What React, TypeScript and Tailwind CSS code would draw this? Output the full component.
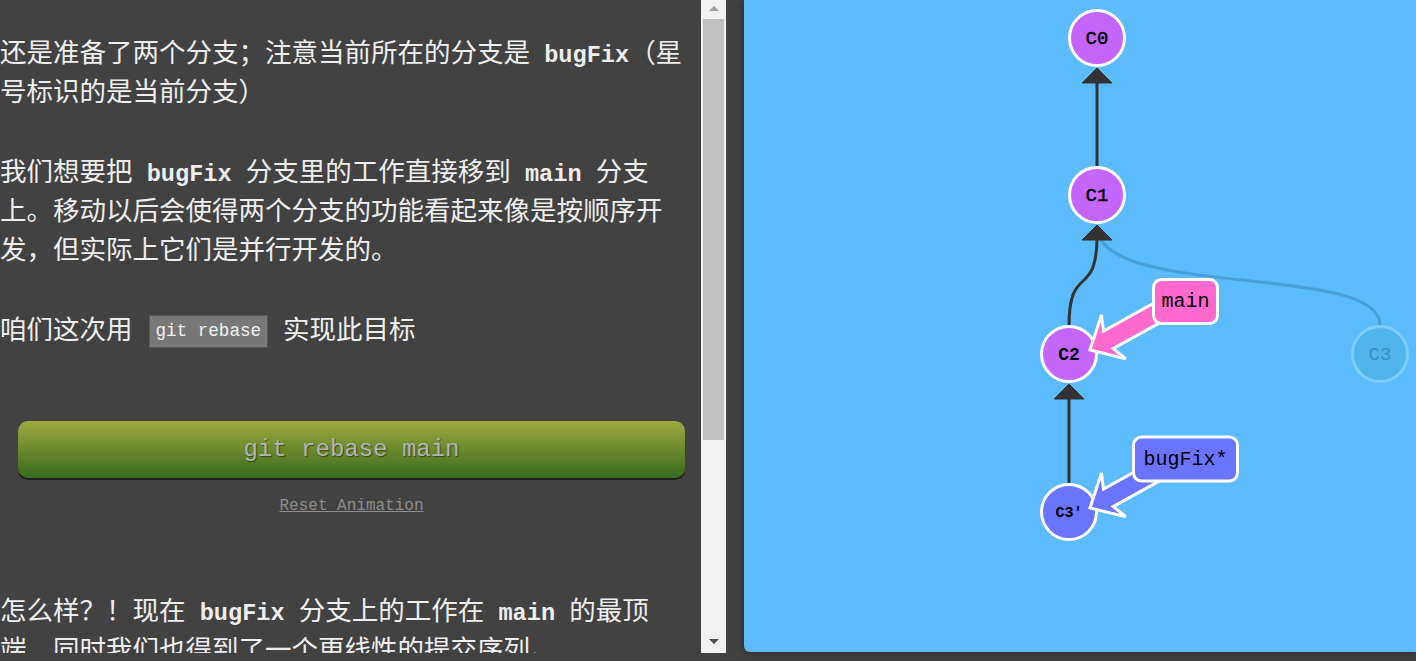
const cjk = "font-['Noto_Sans_CJK_SC',sans-serif]";
const mono = "font-['Liberation_Mono',monospace]";

function Code({ children }: { children: string }) {
  return <b className={`${mono} text-[23.6px] leading-[0] font-bold whitespace-pre`}>{children}</b>;
}

function Scrollbar() {
  return (
    <div className="flex h-[653px] w-[25px] shrink-0 flex-col bg-[#f1f1f1]">
      <div className="flex h-[17px] items-center justify-center">
        <div className="h-0 w-0 border-x-[5px] border-b-[5px] border-x-transparent border-b-[#a3a3a3]" />
      </div>
      <div className="mx-[2px] mt-[2px] h-[421px] bg-[#c1c1c1]" />
      <div className="flex-1" />
      <div className="flex h-[26px] items-start justify-center pt-[12px]">
        <div className="h-0 w-0 border-x-[5px] border-t-[5px] border-x-transparent border-t-[#505050]" />
      </div>
    </div>
  );
}

function Node({ x, y, label, fill, size = 19, bold = false }: { x: number; y: number; label: string; fill: string; size?: number; bold?: boolean }) {
  return (
    <g>
      <circle cx={x} cy={y} r={27.5} fill={fill} stroke="#fff" strokeWidth={3} />
      <text
        x={x}
        y={y + 1}
        textAnchor="middle"
        dominantBaseline="central"
        fontFamily="Liberation Mono, monospace"
        fontSize={size}
        fontWeight={bold ? 700 : 400}
        fill="#000"
        stroke="#000"
        strokeWidth={bold ? 0 : 0.45}
      >
        {label}
      </text>
    </g>
  );
}

// branch label with its fat arrow pointing at the commit
function Branch({ tipX, tipY, rx, ry, w, label, fill }: { tipX: number; tipY: number; rx: number; ry: number; w: number; label: string; fill: string }) {
  return (
    <g>
      <polygon
        points="0,0 27,-25 21,-10 100,-10 100,10 21,10 27,25"
        transform={`translate(${tipX} ${tipY}) rotate(-29)`}
        fill={fill}
        stroke="#fff"
        strokeWidth={3}
        strokeLinejoin="miter"
      />
      <rect x={rx} y={ry} width={w} height={44} rx={8} fill={fill} stroke="#fff" strokeWidth={3} />
      <text
        x={rx + w / 2}
        y={ry + 22}
        textAnchor="middle"
        dominantBaseline="central"
        fontFamily="Liberation Mono, monospace"
        fontSize={20}
        fill="#000"
      >
        {label}
      </text>
    </g>
  );
}

function Graph() {
  return (
    <svg width={672} height={652} className="block">
      {/* faded edge C3 -> C1 */}
      <path d="M 636 325 C 636 262, 353 300, 353 226" fill="none" stroke="#4aa0d6" strokeWidth={3} />
      {/* C1 -> C0 */}
      <line x1={353} y1={167} x2={353} y2={80} stroke="#333" strokeWidth={3} />
      <polygon points="353,68 368,83 338,83" fill="#333" stroke="#333" strokeWidth={1} strokeLinejoin="round" />
      {/* C2 -> C1 */}
      <path d="M 325 326 C 325 262, 353 300, 353 236" fill="none" stroke="#333" strokeWidth={3} />
      <polygon points="353,225 368,240 338,240" fill="#333" stroke="#333" strokeWidth={1} strokeLinejoin="round" />
      {/* C3' -> C2 */}
      <line x1={325} y1={484} x2={325} y2={396} stroke="#333" strokeWidth={3} />
      <polygon points="325,384 340,399 310,399" fill="#333" stroke="#333" strokeWidth={1} strokeLinejoin="round" />

      <Node x={353} y={38} label="C0" fill="#c466fc" />
      <Node x={353} y={195} label="C1" fill="#c466fc" />
      <Node x={325} y={354} label="C2" fill="#c466fc" size={18} bold />
      <Node x={325} y={512} label="C3'" fill="#6a74fc" size={15} bold />

      <g>
        <circle cx={636} cy={354} r={27.5} fill="#52b4ec" stroke="#7fcbfb" strokeWidth={3} />
        <text x={636} y={355} textAnchor="middle" dominantBaseline="central" fontFamily="Liberation Mono, monospace" fontSize={19} fill="#3f8fc4">
          C3
        </text>
      </g>

      <Branch tipX={346} tipY={350} rx={409.5} ry={279.5} w={64} label="main" fill="#ff68cc" />
      <Branch tipX={346} tipY={508} rx={389.5} ry={437} w={104} label="bugFix*" fill="#6b74ff" />
    </svg>
  );
}

export default function App() {
  return (
    <div className="flex h-[661px] w-[1416px] items-start overflow-hidden bg-[#424242]">
      <div className={`${cjk} h-[653px] w-[701px] shrink-0 overflow-hidden pt-[31px] text-[26.5px] leading-[39px] text-[#eeeeee]`}>
        <p className="w-[686px]">
          还是准备了两个分支；注意当前所在的分支是<Code> bugFix</Code>（星号标识的是当前分支）
        </p>
        <p className="mt-[41px] w-[686px]">
          我们想要把<Code> bugFix </Code>分支里的工作直接移到<Code> main </Code>分支上。移动以后会使得两个分支的功能看起来像是按顺序开发，但实际上它们是并行开发的。
        </p>
        <p className="mt-[41px] flex h-[39px] w-[686px] items-center">
          <span>咱们这次用</span>
          <span className={`${mono} ml-[16px] mr-[15px] mt-[7px] flex h-[33px] items-center border border-[#575757] bg-[#787878] px-[6px] text-[17.6px] text-[#f2f2f2]`}>
            git rebase
          </span>
          <span>实现此目标</span>
        </p>
        <div className="ml-[18px] mt-[74px] w-[667px]">
          <div
            className={`${mono} flex h-[57px] items-center justify-center rounded-[10px] bg-linear-to-b from-[#9ea93f] to-[#376a1c] text-[24px] text-[#b2b2b2] shadow-[0_2px_0_#1f1f1f] [text-shadow:1px_1px_1px_rgba(0,0,0,0.45)]`}
          >
            git rebase main
          </div>
          <div className={`${mono} mt-[18px] text-center text-[16px] leading-[20px] text-[#8c8c8c] underline`}>Reset Animation</div>
        </div>
        <p className="mt-[73px] w-[686px]">
          怎么样？！现在<Code> bugFix </Code>分支上的工作在<Code> main </Code>的最顶端，同时我们也得到了一个更线性的提交序列。
        </p>
      </div>
      <Scrollbar />
      <div className="w-[18px] shrink-0" />
      <div className="h-[652px] w-[672px] shrink-0 overflow-hidden rounded-bl-[6px] bg-[#5cbbfb] shadow-[0_0_10px_rgba(0,0,0,0.45)]">
        <Graph />
      </div>
    </div>
  );
}
